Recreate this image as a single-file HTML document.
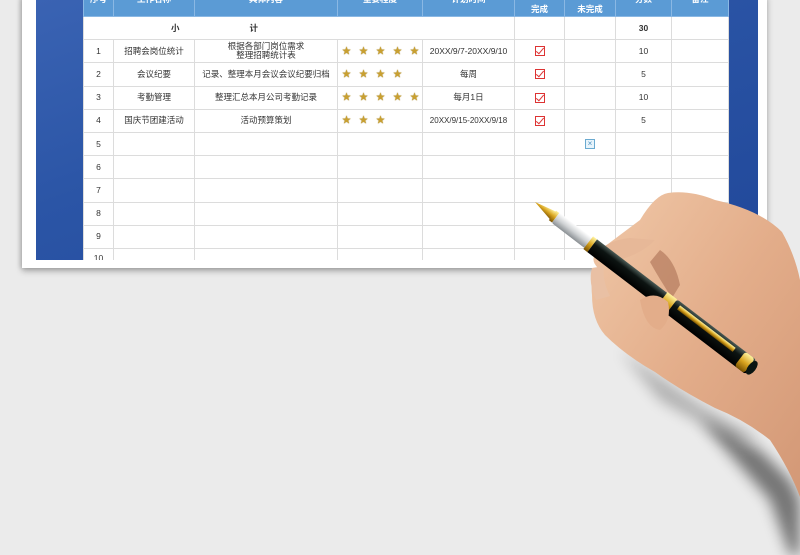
<!DOCTYPE html>
<html><head><meta charset="utf-8"><style>
*{margin:0;padding:0;box-sizing:border-box}
body{width:800px;height:555px;overflow:hidden;background:#ebebeb;position:relative;font-family:"Liberation Sans","Noto Sans CJK SC",sans-serif;}
.card{position:absolute;left:22px;top:-5px;width:745px;height:273px;background:#fff;box-shadow:0 3px 6px rgba(0,0,0,.3),-2px 0 4px rgba(0,0,0,.12);}
.blue{position:absolute;left:36px;top:0;width:722px;height:260px;background:linear-gradient(160deg,#3a63b3 0%,#2b55a6 40%,#21489a 100%);}
table{position:absolute;left:0;top:-7px;width:645px;border-collapse:collapse;table-layout:fixed;background:#fff;}
td{border:1px solid #dcdcdc;font-size:8.5px;color:#333;text-align:center;height:23.2px;line-height:9px;padding:0;overflow:hidden;white-space:nowrap}
tr.h td{background:#5b9bd5;color:#fff;font-weight:bold;height:23px;border-color:#8ab8e4;vertical-align:top;padding-top:1px}
tr.h td.two{vertical-align:bottom;padding-bottom:2px}
.star{color:#c9a030;font-size:9px;letter-spacing:8px;text-shadow:0 0 1px #8a6a10;text-align:left;padding-left:4px}
.cb{display:inline-block;width:10px;height:10px;border:1px solid #d33;position:relative;vertical-align:middle}
.cb:after{content:"";position:absolute;left:2px;top:-1px;width:3px;height:7px;border:solid #d33;border-width:0 1.5px 1.5px 0;transform:rotate(40deg)}
.xb{display:inline-block;width:10px;height:10px;border:1px solid #6aaad0;color:#4a90c0;font-size:8px;line-height:8px;vertical-align:middle;background:#e8f4fb}
.wrap{position:absolute;left:83px;top:0;width:646px;height:260px;overflow:hidden}
</style></head><body>
<div class="card"></div>
<div class="blue"></div>
<div class="wrap">
<table>
<colgroup><col style="width:30px"><col style="width:81px"><col style="width:143px"><col style="width:85px"><col style="width:92px"><col style="width:50px"><col style="width:51px"><col style="width:56px"><col style="width:57px"></colgroup>
<tr class="h"><td>序号</td><td>工作名称</td><td>具体内容</td><td>重要程度</td><td>计划时间</td><td class="two">完成</td><td class="two">未完成</td><td>分数</td><td>备注</td></tr>
<tr><td colspan="5" style="font-weight:bold;text-align:left;padding-left:87px">小<span style="display:inline-block;width:70px"></span>计</td><td></td><td></td><td style="font-weight:bold">30</td><td></td></tr>
<tr><td>1</td><td>招聘会岗位统计</td><td>根据各部门岗位需求<br>整理招聘统计表</td><td class="star">★★★★★</td><td>20XX/9/7-20XX/9/10</td><td><span class="cb"></span></td><td></td><td>10</td><td></td></tr>
<tr><td>2</td><td>会议纪要</td><td>记录、整理本月会议会议纪要归档</td><td class="star">★★★★</td><td>每周</td><td><span class="cb"></span></td><td></td><td>5</td><td></td></tr>
<tr><td>3</td><td>考勤管理</td><td>整理汇总本月公司考勤记录</td><td class="star">★★★★★</td><td>每月1日</td><td><span class="cb"></span></td><td></td><td>10</td><td></td></tr>
<tr><td>4</td><td>国庆节团建活动</td><td>活动预算策划</td><td class="star">★★★</td><td style="font-size:8px">20XX/9/15-20XX/9/18</td><td><span class="cb"></span></td><td></td><td>5</td><td></td></tr>
<tr><td>5</td><td></td><td></td><td></td><td></td><td></td><td><span class="xb">×</span></td><td></td><td></td></tr>
<tr><td>6</td><td></td><td></td><td></td><td></td><td></td><td></td><td></td><td></td></tr>
<tr><td>7</td><td></td><td></td><td></td><td></td><td></td><td></td><td></td><td></td></tr>
<tr><td>8</td><td></td><td></td><td></td><td></td><td></td><td></td><td></td><td></td></tr>
<tr><td>9</td><td></td><td></td><td></td><td></td><td></td><td></td><td></td><td></td></tr>
<tr><td style="vertical-align:top;padding-top:5px">10</td><td></td><td></td><td></td><td></td><td></td><td></td><td></td><td></td></tr>
</table></div>
<svg width="800" height="555" style="position:absolute;left:0;top:0">
<defs>
<filter id="bl" x="-50%" y="-50%" width="200%" height="200%"><feGaussianBlur stdDeviation="7"/></filter>
<linearGradient id="sk" x1="0" y1="0" x2="1" y2="1"><stop offset="0" stop-color="#f0c8a8"/><stop offset=".5" stop-color="#e3ad8a"/><stop offset="1" stop-color="#d39876"/></linearGradient>
<linearGradient id="gd" x1="0" y1="0" x2="0" y2="1"><stop offset="0" stop-color="#fff3a0"/><stop offset=".5" stop-color="#d9a520"/><stop offset="1" stop-color="#7a5200"/></linearGradient>
<linearGradient id="bk" x1="0" y1="0" x2="0" y2="1"><stop offset="0" stop-color="#4a5a55"/><stop offset=".35" stop-color="#0d1412"/><stop offset="1" stop-color="#000"/></linearGradient>
<linearGradient id="sv" x1="0" y1="0" x2="0" y2="1"><stop offset="0" stop-color="#fff"/><stop offset=".5" stop-color="#cfd2d4"/><stop offset="1" stop-color="#8a8f93"/></linearGradient>
</defs>
<path d="M700 420 L760 450 L790 480 L800 500 L800 555 L790 555 L770 500 Z" fill="#000" opacity=".5" filter="url(#bl)"/>
<path d="M620 350 L700 405 L760 440 L730 440 L660 400 Z" fill="#000" opacity=".25" filter="url(#bl)"/>
<path d="M598 268 Q588 258 600 250 L640 220 Q655 195 668 193 Q690 190 715 200 Q760 210 782 232 Q795 255 800 280 L800 497 Q790 470 770 440 Q745 420 715 408 Q680 390 655 372 Q625 355 605 335 Q592 320 592 295 Q590 278 598 268 Z" fill="url(#sk)"/>
<path d="M600 250 Q610 240 630 238 L655 240 Q640 256 610 262 Z" fill="#e7b898"/>
<path d="M660 250 Q675 260 680 285 L672 298 Q660 280 650 262 Z" fill="#b47a5e" opacity=".7"/>
<path d="M592 268 Q588 282 596 300 L610 296 Q602 280 604 266 Z" fill="#e9c0a4"/>
<g transform="translate(535,202) rotate(37.4)">
<path d="M0 0 L22 -5 L24 5 Z" fill="url(#gd)"/>
<rect x="22" y="-6" width="4" height="12" fill="url(#gd)"/>
<rect x="26" y="-6.5" width="42" height="13" rx="2" fill="url(#sv)"/>
<rect x="67" y="-8" width="5" height="16" fill="url(#gd)"/>
<rect x="72" y="-8" width="92" height="16" fill="url(#bk)"/>
<rect x="160" y="-9" width="12" height="18" fill="url(#gd)"/>
<rect x="172" y="-9" width="100" height="18" rx="3" fill="url(#bk)"/>
<rect x="178" y="-6" width="70" height="5" fill="url(#gd)"/>
<rect x="258" y="-9" width="12" height="18" rx="3" fill="url(#gd)"/>
<ellipse cx="273" cy="0" rx="4" ry="8" fill="#0a1512"/>
</g>
<path d="M640 300 Q655 290 668 302 Q672 320 660 330 Q645 328 640 300 Z" fill="#e3ad8a"/>
</svg>
</body></html>
